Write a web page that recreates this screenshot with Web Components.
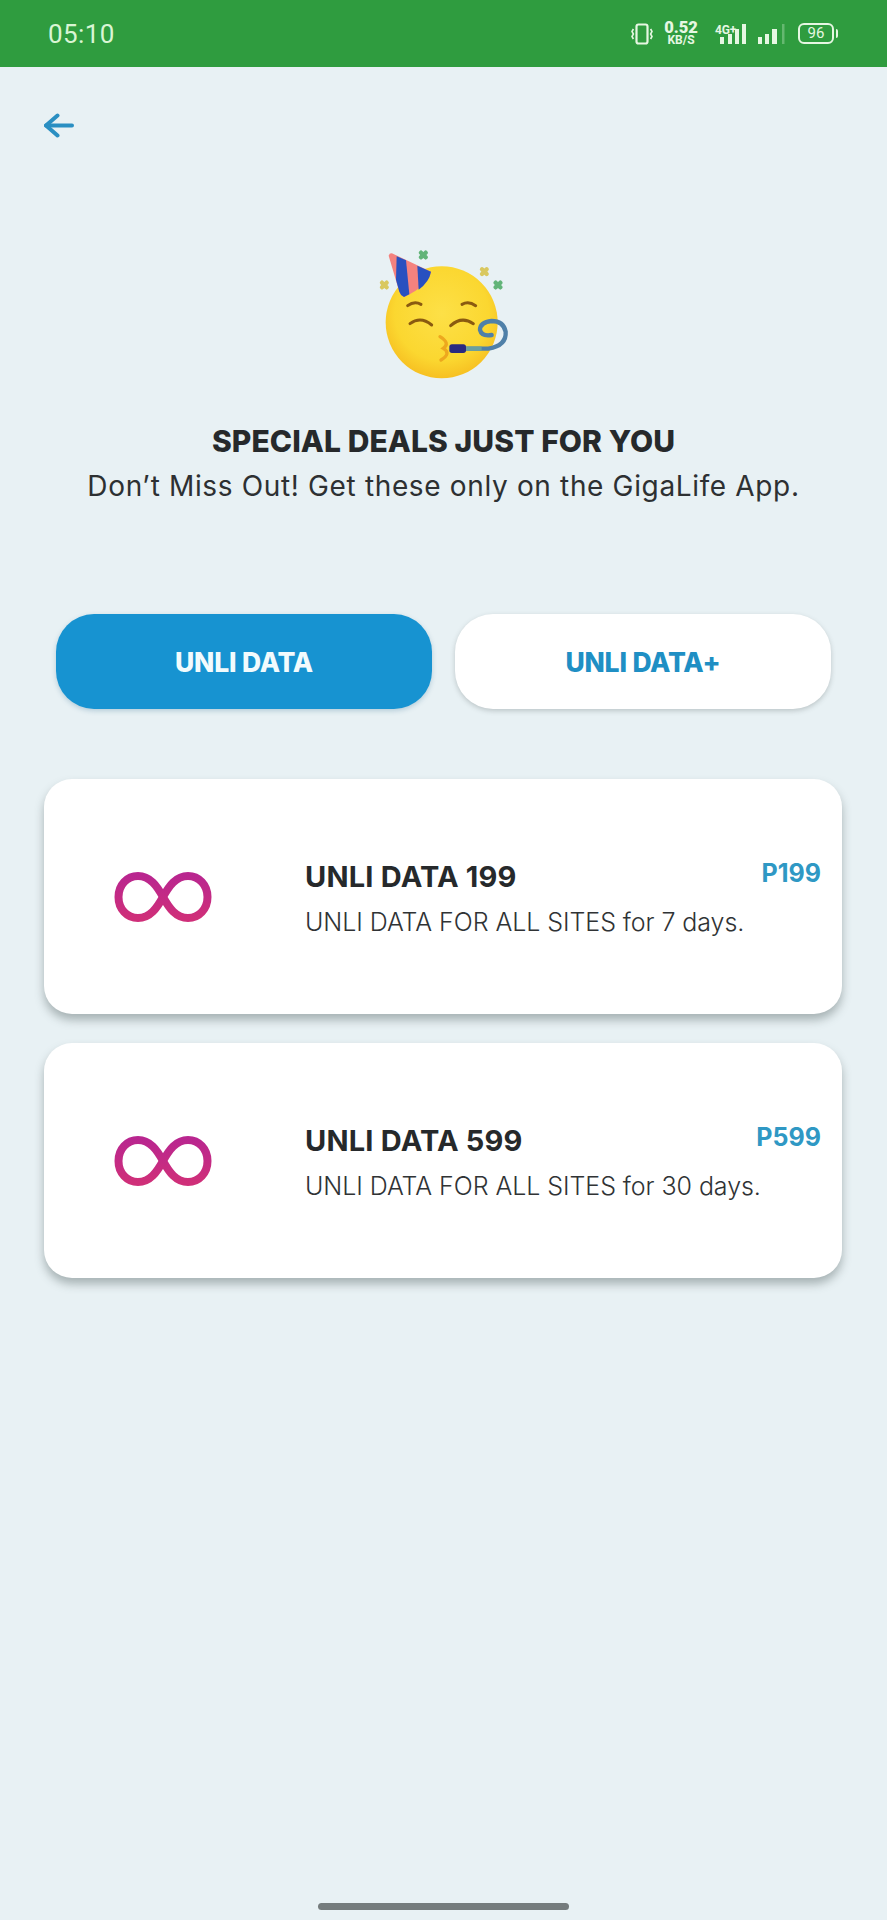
<!DOCTYPE html>
<html lang="en">
<head>
<meta charset="utf-8">
<title>Special deals</title>
<style>
  html, body { margin: 0; padding: 0; }
  body { background: #e8f1f4; font-family: Inter, "Liberation Sans", sans-serif; }
</style>
</head>
<body>
<deals-page>
  <status-bar slot="status"></status-bar>
  <deals-hero slot="hero"></deals-hero>
  <plan-tabs slot="tabs"></plan-tabs>
  <plan-card name="UNLI DATA 199" price="P199" description="UNLI DATA FOR ALL SITES for 7 days."></plan-card>
  <plan-card name="UNLI DATA 599" price="P599" description="UNLI DATA FOR ALL SITES for 30 days."></plan-card>
</deals-page>

<script>
class DealsPage extends HTMLElement {
  constructor() {
    super();
    this.attachShadow({ mode: 'open' });
    this.shadowRoot.innerHTML = `
      <style>
        :host { display: flex; flex-direction: column; height: 1920px; overflow: hidden; background: #e8f1f4; }
        .back { display: block; margin: 46px 0 0 44px; width: 31px; height: 25px; }
        .cards { display: flex; flex-direction: column; gap: 29px; padding: 0 45px 0 44px; margin-top: 70px; }
        .spacer { flex: 1; }
        .home { align-self: center; width: 251px; height: 7px; border-radius: 4px; background: #757c7d; margin: 0 0 10px 0; }
      </style>
      <slot name="status"></slot>
      <svg class="back" viewBox="0 0 31 25" fill="none" stroke="#2a8fc2" stroke-width="4" stroke-linecap="round" stroke-linejoin="round">
        <path d="M2 12.5H28"/><path d="M13.5 2.5 2 12.5 13.5 22.5"/>
      </svg>
      <slot name="hero"></slot>
      <slot name="tabs"></slot>
      <div class="cards"><slot></slot></div>
      <div class="spacer"></div>
      <div class="home"></div>
    `;
  }
}

class StatusBar extends HTMLElement {
  constructor() {
    super();
    this.attachShadow({ mode: 'open' });
    this.shadowRoot.innerHTML = `
      <style>
        :host { display: flex; align-items: center; justify-content: space-between; height: 67px; box-sizing: border-box;
          padding: 0 49px 0 48px; background: #2f9c3f; color: #e6f7e2; font-family: Roboto, "Liberation Sans", sans-serif; }
        .time { font-size: 26px; letter-spacing: 0.4px; color: #d9f5d4; }
        .icons { display: flex; align-items: center; }
        .speed { display: flex; flex-direction: column; align-items: center; width: 34px; white-space: nowrap; font-weight: 700; margin: 0 17px 0 11px; }
        .speed b { font-size: 16.5px; line-height: 14px; }
        .speed i { font-style: normal; font-size: 12px; line-height: 11px; }
        .net { position: relative; display: block; width: 33px; height: 20px; }
        .net span { position: absolute; left: 0; top: 0; font-size: 12px; font-weight: 700; line-height: 12px; letter-spacing: -0.2px; }
        .net svg { display: block; }
        .batt { display: flex; align-items: center; margin-left: 13px; }
        .cell { box-sizing: border-box; width: 36px; height: 21px; border: 2px solid #e6f7e2; border-radius: 6px;
          display: flex; align-items: center; justify-content: center; font-size: 15px; line-height: 1; }
        .nub { width: 2px; height: 9px; background: #e6f7e2; margin-left: 2px; border-radius: 0 2px 2px 0; }
      </style>
      <span class="time">05:10</span>
      <div class="icons">
        <svg width="22" height="22" viewBox="0 0 22 22" fill="none" stroke="#e6f7e2">
          <rect x="5.5" y="1.5" width="11" height="19" rx="2" stroke-width="2.2"/>
          <path d="M2.4 6 1 8.5 2.4 11 1 13.5 2.4 16M19.6 6 21 8.5 19.6 11 21 13.5 19.6 16" stroke-width="1.6"/>
        </svg>
        <div class="speed"><b>0.52</b><i>KB/S</i></div>
        <div class="net">
          <svg width="33" height="20" viewBox="0 0 33 20" fill="#e6f7e2">
            <rect x="5" y="13" width="4" height="7"/><rect x="13" y="10" width="4" height="10"/>
            <rect x="20" y="5" width="4" height="15"/><rect x="27" y="0" width="4" height="20"/>
          </svg>
          <span>4G+</span>
        </div>
        <svg style="margin-left:10px" width="27" height="20" viewBox="0 0 27 20" fill="#e6f7e2">
          <rect x="0" y="13" width="4" height="7"/><rect x="7" y="10" width="4" height="10"/>
          <rect x="14" y="5" width="5" height="15"/><rect x="24" y="0" width="2.5" height="20" opacity=".3"/>
        </svg>
        <div class="batt"><div class="cell">96</div><div class="nub"></div></div>
      </div>
    `;
  }
}

class DealsHero extends HTMLElement {
  constructor() {
    super();
    this.attachShadow({ mode: 'open' });
    this.shadowRoot.innerHTML = `
      <style>
        :host { display: flex; flex-direction: column; align-items: center; margin-top: 97px; color: #26292b; }
        svg { display: block; width: 160px; height: 150px; margin-right: 7px; }
        h1 { margin: 36px 0 0; font-size: 30px; line-height: 40px; font-weight: 800; letter-spacing: 0.08px; white-space: nowrap; }
        p { margin: 5px 0 0; font-size: 28px; line-height: 40px; font-weight: 400; letter-spacing: 0.65px; color: #2d3032; white-space: nowrap; }
      </style>
      <svg viewBox="0 0 480 450">
        <defs>
          <radialGradient id="face" cx="50%" cy="42%" r="60%">
            <stop offset="0" stop-color="#fde047"/><stop offset=".7" stop-color="#fbd730"/><stop offset="1" stop-color="#f6bd20"/>
          </radialGradient>
        </defs>
        <g fill="none" stroke-width="13" stroke-linecap="round">
          <path d="M183 53 197 67M197 53 183 67M407 143 421 157M421 143 407 157" stroke="#62b478"/>
          <path d="M66 143 80 157M80 143 66 157M366 103 380 117M380 103 366 117" stroke="#d9c85f"/>
        </g>
        <circle cx="245" cy="262" r="168" fill="url(#face)"/>
        <path d="M86 62Q90 50 102 58L213 110Q205 152 132 186Q122 182 118 170Z" fill="#f4827e"/>
        <path d="M110 64 138 76 148 178 132 186Q122 182 118 170L108 134Z" fill="#2850c0"/>
        <path d="M172 92 213 110Q208 140 176 164Z" fill="#2850c0"/>
        <g fill="none" stroke="#8a5a10" stroke-width="9" stroke-linecap="round">
          <path d="M143 212Q163 197 183 208"/><path d="M306 208Q326 197 347 212"/>
          <path d="M150 266Q182 242 215 270"/><path d="M272 272Q305 242 340 266"/>
        </g>
        <path d="M240 305Q272 325 250 340Q275 355 243 375" fill="none" stroke="#eda81e" stroke-width="10" stroke-linecap="round"/>
        <path d="M318 341H385Q440 332 437 290Q430 258 395 258Q360 262 360 285Q365 305 395 300" fill="none" stroke="#4f80a8" stroke-width="13" stroke-linecap="round"/>
        <path d="M318 341H365" fill="none" stroke="#6aa0a0" stroke-width="13"/>
        <rect x="268" y="328" width="50" height="26" rx="8" fill="#2a2a80"/>
      </svg>
      <h1>SPECIAL DEALS JUST FOR YOU</h1>
      <p>Don’t Miss Out! Get these only on the GigaLife App.</p>
    `;
  }
}

class PlanTabs extends HTMLElement {
  constructor() {
    super();
    this.attachShadow({ mode: 'open' });
    this.shadowRoot.innerHTML = `
      <style>
        :host { display: grid; grid-template-columns: 376px 376px; gap: 23px; padding-left: 56px; margin-top: 108px; }
        .tab { height: 95px; border-radius: 38px; display: flex; align-items: center; justify-content: center;
          font-size: 26.5px; font-weight: 800; letter-spacing: -0.2px; }
        .on { background: #1793d1; color: #f2fbfd; box-shadow: 0 2px 5px rgba(30,100,140,.25); }
        .off { background: #fff; color: #1f8fc4; box-shadow: 0 2px 5px rgba(60,70,70,.25); }
      </style>
      <div class="tab on">UNLI DATA</div>
      <div class="tab off">UNLI DATA+</div>
    `;
  }
}

class PlanCard extends HTMLElement {
  constructor() {
    super();
    this.attachShadow({ mode: 'open' });
    this.shadowRoot.innerHTML = `
      <style>
        :host { display: grid; grid-template-columns: 261px minmax(0, 1fr) auto; align-items: start; height: 235px; box-sizing: border-box;
          padding: 80px 21px 0 0; background: #fff; border-radius: 28px; box-shadow: 0 6px 10px rgba(70,85,85,.4); color: #26292b; }
        svg { display: block; width: 98px; height: 50px; margin: 13px 0 0 70px; }
        .name { font-size: 29px; line-height: 36px; font-weight: 700; letter-spacing: 0.2px; white-space: nowrap; }
        .desc { font-size: 25px; line-height: 36px; font-weight: 300; color: #303335; margin-top: 9px; letter-spacing: -0.06px; white-space: nowrap; }
        .price { font-size: 25px; line-height: 32px; font-weight: 700; color: #2f98c4; margin-top: -2px; }
      </style>
      <svg viewBox="0 0 98 50" fill="none">
        <defs>
          <linearGradient id="inf" x1="0" y1="0" x2="0" y2="1">
            <stop offset="0" stop-color="#b9268f"/><stop offset="1" stop-color="#cf2f79"/>
          </linearGradient>
        </defs>
        <path d="M49 25C43 14 36 4 24 4 13 4 4.5 13 4.5 25S13 46 24 46C36 46 43 36 49 25S62 4 74 4C85 4 93.5 13 93.5 25S85 46 74 46C62 46 55 36 49 25Z" stroke="url(#inf)" stroke-width="8"/>
      </svg>
      <div>
        <div class="name"></div>
        <div class="desc"></div>
      </div>
      <div class="price"></div>
    `;
  }

  connectedCallback() {
    this.shadowRoot.querySelector('.name').textContent = this.getAttribute('name');
    this.shadowRoot.querySelector('.desc').textContent = this.getAttribute('description');
    this.shadowRoot.querySelector('.price').textContent = this.getAttribute('price');
  }
}

customElements.define('deals-page', DealsPage);
customElements.define('status-bar', StatusBar);
customElements.define('deals-hero', DealsHero);
customElements.define('plan-tabs', PlanTabs);
customElements.define('plan-card', PlanCard);
</script>
</body>
</html>
